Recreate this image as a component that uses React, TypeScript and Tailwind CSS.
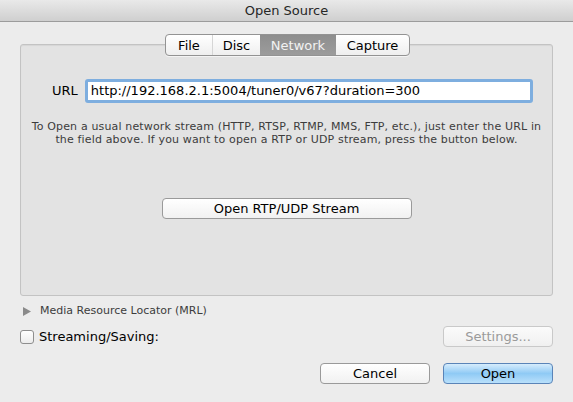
import React from "react";

const font = { fontFamily: '"Lucida Grande", "DejaVu Sans", sans-serif' };

const tabs = ["File", "Disc", "Network", "Capture"];

const Button = ({
  label,
  className = "",
  disabled = false,
  primary = false,
}: {
  label: string;
  className?: string;
  disabled?: boolean;
  primary?: boolean;
}) => (
  <button
    className={
      "flex items-center justify-center h-[21px] rounded-[4px] border text-[13px] leading-none " +
      (primary
        ? "border-[#5a84b8] bg-gradient-to-b from-[#d6ecfc] via-[#8fcaf5] to-[#b9e0fb] text-black "
        : disabled
        ? "border-[#c9c9c9] bg-gradient-to-b from-[#fbfbfb] to-[#f0f0f0] text-[#9a9a9a] "
        : "border-[#9a9a9a] bg-gradient-to-b from-white to-[#f1f1f1] text-black ") +
      className
    }
  >
    {label}
  </button>
);

export default function App() {
  return (
    <div className="w-[573px] h-[402px] bg-[#ececec] flex flex-col overflow-hidden" style={font}>
      {/* title bar */}
      <div className="h-[22px] shrink-0 flex items-center justify-center bg-gradient-to-b from-[#e9e9e9] to-[#cfcfcf] border-b border-[#9c9c9c] text-[13px] text-[#262626]">
        Open Source
      </div>

      {/* tab view */}
      <div className="relative mx-[20px] mt-[22px] h-[252px] rounded-[3px] border border-[#c3c3c3] bg-[#e3e3e3] shadow-[inset_0_1px_1px_rgba(0,0,0,0.06)]">
        <div className="absolute left-[144px] -top-[11px] flex h-[22px] rounded-[4px] border border-[#939393] bg-gradient-to-b from-white to-[#efefef] shadow-[0_1px_0_rgba(255,255,255,0.6)] overflow-hidden">
          {tabs.map((t) => (
            <div
              key={t}
              className={
                "flex items-center justify-center text-[13px] leading-none " +
                (t === "Network"
                  ? "bg-gradient-to-b from-[#8e8e8e] to-[#9c9c9c] text-[#f2f2f2] w-[76px] "
                  : "text-black ") +
                (t === "File" ? "w-[46px] " : "") +
                (t === "Disc" ? "w-[48px] border-l border-[#d6d6d6] " : "") +
                (t === "Capture" ? "w-[73px] " : "")
              }
            >
              {t}
            </div>
          ))}
        </div>

        {/* URL row */}
        <div className="flex items-center mt-[34px] ml-[31px]">
          <span className="text-[13px] text-black mr-[7px]">URL</span>
          <div className="w-[448px] h-[24px] rounded-[3px] border-[3px] border-[#7eaedf] bg-white flex items-center pl-[3px] text-[13px] text-black">
            http://192.168.2.1:5004/tuner0/v67?duration=300
          </div>
        </div>

        <p className="mt-[17px] text-center text-[11px] leading-[13px] tracking-[0.15px] text-[#3c3c3c]">
          To Open a usual network stream (HTTP, RTSP, RTMP, MMS, FTP, etc.), just enter the URL in
          <br />
          the field above. If you want to open a RTP or UDP stream, press the button below.
        </p>

        <div className="flex justify-center mt-[52px]">
          <Button label="Open RTP/UDP Stream" className="w-[250px]" />
        </div>
      </div>

      {/* MRL disclosure */}
      <div className="flex items-center mt-[8px] ml-[23px] h-[14px]">
        <svg width="8" height="9" viewBox="0 0 8 9">
          <path d="M0 0 L8 4.5 L0 9 Z" fill="#8a8a8a" />
        </svg>
        <span className="ml-[9px] text-[11px] text-[#3c3c3c]">Media Resource Locator (MRL)</span>
      </div>

      {/* streaming row */}
      <div className="flex items-center justify-between mt-[8px] mx-[20px]">
        <div className="flex items-center">
          <div className="w-[14px] h-[14px] rounded-[3px] border border-[#8e8e8e] bg-gradient-to-b from-white to-[#ececec]" />
          <span className="ml-[5px] text-[13px] text-black">Streaming/Saving:</span>
        </div>
        <Button label="Settings..." disabled className="w-[110px]" />
      </div>

      {/* footer */}
      <div className="flex justify-end gap-[13px] mt-[16px] mr-[20px]">
        <Button label="Cancel" className="w-[110px]" />
        <Button label="Open" primary className="w-[110px]" />
      </div>
    </div>
  );
}
